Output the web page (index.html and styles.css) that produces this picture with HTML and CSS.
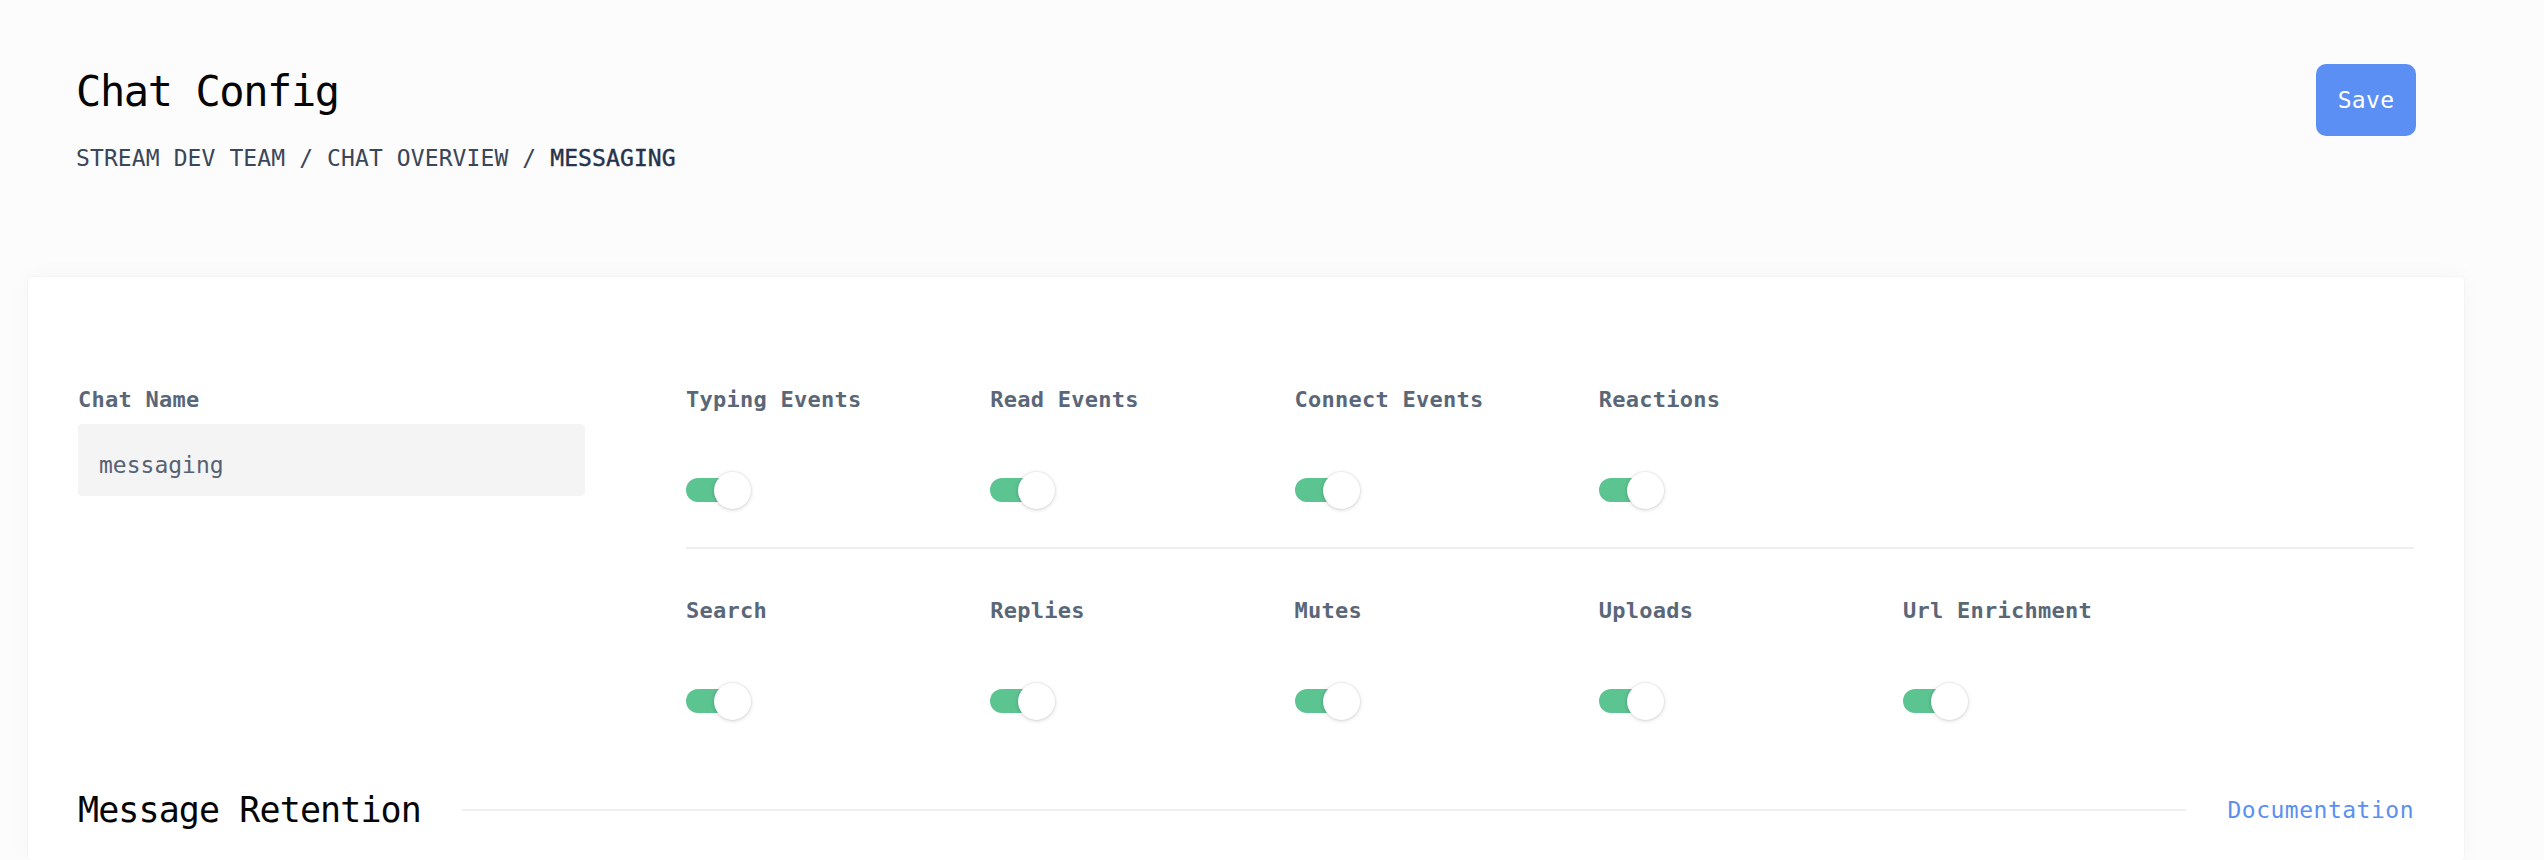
FILE: index.html
```html
<!DOCTYPE html>
<html lang="en">
<head>
<meta charset="utf-8">
<title>Chat Config</title>
<link rel="stylesheet" href="styles.css">
</head>
<body>
<header class="page-header">
  <div class="heading">
    <h1 class="title">Chat Config</h1>
    <nav class="crumbs">STREAM DEV TEAM / CHAT OVERVIEW / <span class="crumb-current">MESSAGING</span></nav>
  </div>
  <button class="btn-save" type="button">Save</button>
</header>

<main class="card">
  <section class="settings">
    <div class="name-col">
      <label class="field-label" for="chat-name">Chat Name</label>
      <div class="text-input" id="chat-name">messaging</div>
    </div>
    <div class="toggles-col">
      <div class="toggle-row">
        <div class="toggle-item"><div class="field-label">Typing Events</div><span class="switch"><span class="knob"></span></span></div>
        <div class="toggle-item"><div class="field-label">Read Events</div><span class="switch"><span class="knob"></span></span></div>
        <div class="toggle-item"><div class="field-label">Connect Events</div><span class="switch"><span class="knob"></span></span></div>
        <div class="toggle-item"><div class="field-label">Reactions</div><span class="switch"><span class="knob"></span></span></div>
      </div>
      <hr class="divider">
      <div class="toggle-row">
        <div class="toggle-item"><div class="field-label">Search</div><span class="switch"><span class="knob"></span></span></div>
        <div class="toggle-item"><div class="field-label">Replies</div><span class="switch"><span class="knob"></span></span></div>
        <div class="toggle-item"><div class="field-label">Mutes</div><span class="switch"><span class="knob"></span></span></div>
        <div class="toggle-item"><div class="field-label">Uploads</div><span class="switch"><span class="knob"></span></span></div>
        <div class="toggle-item"><div class="field-label">Url Enrichment</div><span class="switch"><span class="knob"></span></span></div>
      </div>
    </div>
  </section>

  <section class="section-head">
    <h2 class="section-title">Message Retention</h2>
    <span class="section-rule"></span>
    <a class="doc-link" href="#">Documentation</a>
  </section>
</main>
</body>
</html>
```

FILE: styles.css
```css
html, body {
  margin: 0;
  padding: 0;
}
body {
  background: #fcfcfc;
  font-family: "DejaVu Sans Mono", "Liberation Mono", monospace;
  font-size: 23px;
  line-height: 28px;
  color: #2d3a4e;
  height: 860px;
  overflow: hidden;
}

.page-header {
  display: flex;
  justify-content: space-between;
  align-items: flex-start;
  padding: 64px 128px 0 76px;
}
.title {
  margin: 3px 0 0 0;
  font-size: 42px;
  line-height: 50px;
  font-weight: normal;
  letter-spacing: -1.4px;
  color: #050505;
}
.crumbs {
  margin-top: 27px;
  color: #3a4659;
  letter-spacing: 0.1px;
}
.crumb-current {
  color: #26334a;
  -webkit-text-stroke: 0.4px #26334a;
}
.btn-save {
  width: 100px;
  height: 72px;
  border: none;
  border-radius: 10px;
  background: #5b8ff4;
  color: #ffffff;
  font-family: "DejaVu Sans Mono", monospace;
  font-size: 23px;
  letter-spacing: 0.3px;
  padding: 0;
}

.card {
  margin: 105px 80px 0 28px;
  background: #ffffff;
  border-radius: 4px;
  box-shadow: 0 0 24px rgba(0, 0, 0, 0.035), 0 0 0 1px rgba(0, 0, 0, 0.02);
  padding: 109px 50px 0 50px;
  height: 583px;
  box-sizing: border-box;
}

.settings {
  display: flex;
}
.name-col {
  width: 608px;
  display: flex;
  flex-direction: column;
}
.field-label {
  display: block;
  font-weight: bold;
  color: #5a6779;
  font-size: 22px;
  letter-spacing: 0.25px;
}
.text-input {
  margin-top: 10px;
  width: 507px;
  height: 72px;
  box-sizing: border-box;
  padding: 10px 20px 0 21px;
  line-height: 62px;
  background: #f4f4f4;
  border-radius: 4px;
  color: #566273;
}

.toggles-col {
  flex: 1;
  display: flex;
  flex-direction: column;
}
.toggle-row {
  display: grid;
  grid-template-columns: repeat(5, 304.25px);
}
.toggle-item {
  display: flex;
  flex-direction: column;
  align-items: flex-start;
}
.switch {
  position: relative;
  display: block;
  margin-top: 64px;
  width: 56px;
  height: 24px;
  border-radius: 12px;
  background: #5cc490;
}
.knob {
  position: absolute;
  left: 28px;
  top: -6.5px;
  width: 37px;
  height: 37px;
  border-radius: 50%;
  background: #ffffff;
  box-shadow: 0 1px 4px rgba(0, 0, 0, 0.16), 0 0 0 1px rgba(0, 0, 0, 0.04);
}
.divider {
  margin: 45px 0 48px 0;
  border: none;
  height: 2px;
  background: #eeeeee;
}

.section-head {
  display: flex;
  align-items: center;
  margin-top: 76px;
}
.section-title {
  margin: 0;
  font-size: 35px;
  line-height: 42px;
  font-weight: normal;
  letter-spacing: -0.9px;
  color: #050505;
}
.section-rule {
  flex: 1;
  height: 2px;
  background: #eeeeee;
  margin: 0 41px;
}
.doc-link {
  color: #5b8ff0;
  text-decoration: none;
  letter-spacing: 0.5px;
}
```
